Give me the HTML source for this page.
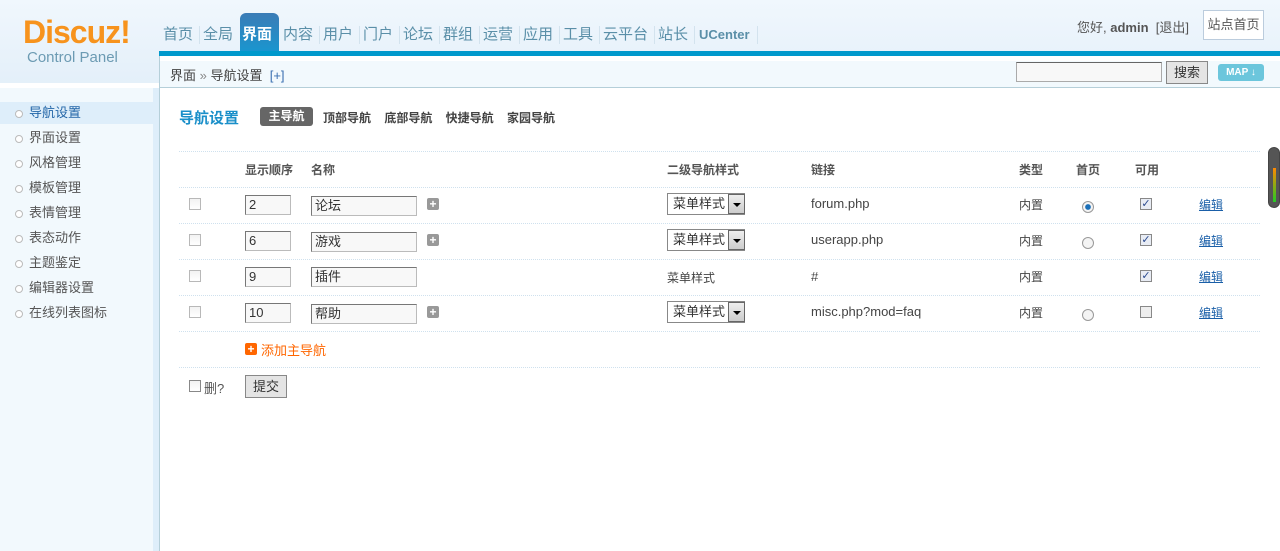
<!DOCTYPE html>
<html><head><meta charset="utf-8"><style>
*{margin:0;padding:0;box-sizing:border-box}
body{width:1280px;height:551px;overflow:hidden;background:#fff;font:12px "Liberation Sans","Noto Sans CJK SC",sans-serif;color:#333;position:relative}
.a{position:absolute}
.hd{left:0;top:0;width:1280px;height:88px;background:linear-gradient(#f0f7fd,#e3eff9)}
.nav a{position:absolute;top:25px;font-size:15px;font-weight:normal;color:#5a8fa8;text-decoration:none;line-height:20px}
.sep{position:absolute;top:26px;width:1px;height:18px;background:#d3e3ee}
.side{left:0;top:88px;width:153px;height:463px;background:#f2f9fd}
.side div{position:absolute;left:0;width:153px;height:22px;line-height:22px;padding-left:29px;font-size:13px;color:#555}
.side div:before{content:"";position:absolute;left:15px;top:8px;width:6px;height:6px;border:1px solid #bbb;border-radius:50%;background:#fff}
.th{position:absolute;top:161px;font-weight:bold;color:#555;font-size:12px}
.line{position:absolute;left:179px;width:1081px;border-top:1px dotted #cfe1ee}
.cb{position:absolute;width:12px;height:12px;border:1px solid #b8b8b8;background:linear-gradient(#f2f2f2,#fff)}
.in{position:absolute;height:20px;border:1px solid #bbb;border-top-color:#777;border-left-color:#777;background:#f8f8f8;font-size:13px;line-height:18px;padding-left:3px;color:#333}
.plus{position:absolute;width:12px;height:12px;background:#999;border-radius:2px;color:#fff;font:bold 12px/12px "Liberation Sans";text-align:center}
.sel{position:absolute;left:667px;width:78px;height:22px;border:1px solid #888;border-right:none;background:#fff;font-size:13px;line-height:20px;padding-left:5px}
.sel i{position:absolute;right:0;top:0;width:17px;height:20px;border:1px solid #666;background:linear-gradient(#eee,#ccc)}
.sel i:after{content:"";position:absolute;left:4px;top:8px;border:4px solid transparent;border-top:4px solid #000}
.t{position:absolute;font-size:13px;color:#444}
.ed{position:absolute;left:1199px;color:#1a5fa8;text-decoration:underline;font-size:12px}
.chk{position:absolute;left:1140px;width:12px;height:12px;border:1px solid #888;background:#e8ecf4;color:#2b4a8f;font:bold 11px/10px "DejaVu Sans";text-align:center}
.rad{position:absolute;left:1082px;width:12px;height:12px;border-radius:50%;border:1px solid #999;background:#f4f4f4}
</style></head><body>
<div class="a hd"></div>
<div class="a" style="left:0;top:83px;width:159px;height:5px;background:#fff"></div>
<div class="a" style="left:23px;top:13px;font:bold 32px/38px 'Liberation Sans';color:#f7931d;letter-spacing:-1px">Discuz!</div>
<div class="a" style="left:27px;top:49px;font-size:15px;color:#6c9bb3">Control Panel</div>
<div class="nav">
<a style="left:163px">首页</a><span class="sep" style="left:199px"></span>
<a style="left:203px">全局</a>
<div class="a" style="left:240px;top:13px;width:39px;height:39px;border-radius:6px 6px 0 0;background:linear-gradient(#3b7cb6,#1996cf)"></div>
<a style="left:242px;color:#fff;font-weight:bold">界面</a>
<a style="left:283px">内容</a><span class="sep" style="left:319px"></span>
<a style="left:323px">用户</a><span class="sep" style="left:359px"></span>
<a style="left:363px">门户</a><span class="sep" style="left:399px"></span>
<a style="left:403px">论坛</a><span class="sep" style="left:439px"></span>
<a style="left:443px">群组</a><span class="sep" style="left:479px"></span>
<a style="left:483px">运营</a><span class="sep" style="left:519px"></span>
<a style="left:523px">应用</a><span class="sep" style="left:559px"></span>
<a style="left:563px">工具</a><span class="sep" style="left:599px"></span>
<a style="left:603px">云平台</a><span class="sep" style="left:654px"></span>
<a style="left:658px">站长</a><span class="sep" style="left:694px"></span>
<a style="left:699px;font-size:13px;top:25px;font-weight:bold">UCenter</a><span class="sep" style="left:757px"></span>
</div>
<div class="a" style="left:1077px;top:17px;font-size:13px;color:#555">您好, <b>admin</b> &nbsp;[退出]</div>
<div class="a" style="left:1203px;top:10px;width:61px;height:30px;border:1px solid #bcd;background:#fff;font-size:13px;line-height:28px;text-align:center;color:#555">站点首页</div>
<div class="a" style="left:159px;top:51px;width:1121px;height:5px;background:#0099cc"></div>
<div class="a" style="left:159px;top:56px;width:1121px;height:5px;background:#fff"></div>
<div class="a" style="left:160px;top:61px;width:1120px;height:27px;background:#f2f9fd;border-bottom:1px solid #b5cfd9"></div>
<div class="a" style="left:170px;top:65px;font-size:13px;color:#444">界面 <span style="color:#888">»</span> 导航设置 &nbsp;<span style="color:#3a6fb0">[+]</span></div>
<div class="a" style="left:1016px;top:62px;width:146px;height:20px;border:1px solid #aaa;border-top-color:#666;background:#f8f8f8"></div>
<div class="a" style="left:1166px;top:61px;width:42px;height:23px;border:1px solid #888;background:#e4e4e4;font-size:13px;line-height:21px;text-align:center">搜索</div>
<div class="a" style="left:1218px;top:64px;width:46px;height:17px;border-radius:3px;background:#6cc6dc;color:#fff;font:bold 10px/17px 'Liberation Sans';text-align:center">MAP ↓</div>
<div class="a side">
<div style="top:14px;background:#deeefa;color:#2366a8">导航设置</div>
<div style="top:39px">界面设置</div><div style="top:64px">风格管理</div><div style="top:89px">模板管理</div>
<div style="top:114px">表情管理</div><div style="top:139px">表态动作</div><div style="top:164px">主题鉴定</div>
<div style="top:189px">编辑器设置</div><div style="top:214px">在线列表图标</div>
</div>
<div class="a" style="left:153px;top:88px;width:6px;height:463px;background:#deeefa"></div>
<div class="a" style="left:159px;top:56px;width:1px;height:495px;background:#b5cfd9"></div>
<div class="a" style="left:179px;top:107px;font-size:15px;font-weight:bold;color:#1a8fc9">导航设置</div>
<div class="a" style="left:260px;top:107px;width:53px;height:19px;border-radius:3px;background:#666;color:#fff;font-weight:bold;font-size:12px;line-height:19px;text-align:center">主导航</div>
<div class="a" style="left:323px;top:109px;font-weight:bold;color:#444">顶部导航 &nbsp; &nbsp;底部导航 &nbsp; &nbsp;快捷导航 &nbsp; &nbsp;家园导航</div>
<div class="line" style="top:151px"></div><div class="line" style="top:187px"></div><div class="line" style="top:223px"></div>
<div class="line" style="top:259px"></div><div class="line" style="top:295px"></div><div class="line" style="top:331px"></div><div class="line" style="top:367px"></div>
<span class="th" style="left:245px">显示顺序</span><span class="th" style="left:311px">名称</span><span class="th" style="left:667px">二级导航样式</span>
<span class="th" style="left:811px">链接</span><span class="th" style="left:1019px">类型</span><span class="th" style="left:1076px">首页</span><span class="th" style="left:1135px">可用</span>
<div class="cb" style="left:189px;top:198px"></div><div class="in" style="left:245px;top:195px;width:46px">2</div><div class="in" style="left:311px;top:196px;width:106px">论坛</div><div class="plus" style="left:427px;top:198px">+</div>
<div class="sel" style="top:193px">菜单样式<i></i></div><span class="t" style="left:811px;top:196px">forum.php</span><span class="t" style="left:1019px;top:196px;font-size:12px">内置</span>
<div class="rad" style="top:201px;background:radial-gradient(#1a6fb8 35%,#f4f4f4 45%)"></div><div class="chk" style="top:198px">✓</div><span class="ed" style="top:196px">编辑</span>
<div class="cb" style="left:189px;top:234px"></div><div class="in" style="left:245px;top:231px;width:46px">6</div><div class="in" style="left:311px;top:232px;width:106px">游戏</div><div class="plus" style="left:427px;top:234px">+</div>
<div class="sel" style="top:229px">菜单样式<i></i></div><span class="t" style="left:811px;top:232px">userapp.php</span><span class="t" style="left:1019px;top:232px;font-size:12px">内置</span>
<div class="rad" style="top:237px"></div><div class="chk" style="top:234px">✓</div><span class="ed" style="top:232px">编辑</span>
<div class="cb" style="left:189px;top:270px"></div><div class="in" style="left:245px;top:267px;width:46px">9</div><div class="in" style="left:311px;top:267px;width:106px">插件</div>
<span class="t" style="left:667px;top:269px;font-size:12px">菜单样式</span><span class="t" style="left:811px;top:269px">#</span><span class="t" style="left:1019px;top:268px;font-size:12px">内置</span>
<div class="chk" style="top:270px">✓</div><span class="ed" style="top:268px">编辑</span>
<div class="cb" style="left:189px;top:306px"></div><div class="in" style="left:245px;top:303px;width:46px">10</div><div class="in" style="left:311px;top:304px;width:106px">帮助</div><div class="plus" style="left:427px;top:306px">+</div>
<div class="sel" style="top:301px">菜单样式<i></i></div><span class="t" style="left:811px;top:304px">misc.php?mod=faq</span><span class="t" style="left:1019px;top:304px;font-size:12px">内置</span>
<div class="rad" style="top:309px"></div><div class="chk" style="top:306px;background:#eee"></div><span class="ed" style="top:304px">编辑</span>
<div class="plus" style="left:245px;top:343px;background:#f60">+</div><span class="t" style="left:261px;top:340px;color:#f60">添加主导航</span>
<div class="cb" style="left:189px;top:380px;border-color:#888"></div><span class="t" style="left:204px;top:378px;color:#555">删?</span>
<div class="a" style="left:245px;top:375px;width:42px;height:23px;border:1px solid #888;background:#e4e4e4;font-size:13px;line-height:21px;text-align:center">提交</div>
<div class="a" style="left:1268px;top:147px;width:12px;height:61px;border-radius:6px;background:#555;border:1px solid #444"></div>
<div class="a" style="left:1273px;top:168px;width:3px;height:34px;background:linear-gradient(#f80,#2c2)"></div>
</body></html>
